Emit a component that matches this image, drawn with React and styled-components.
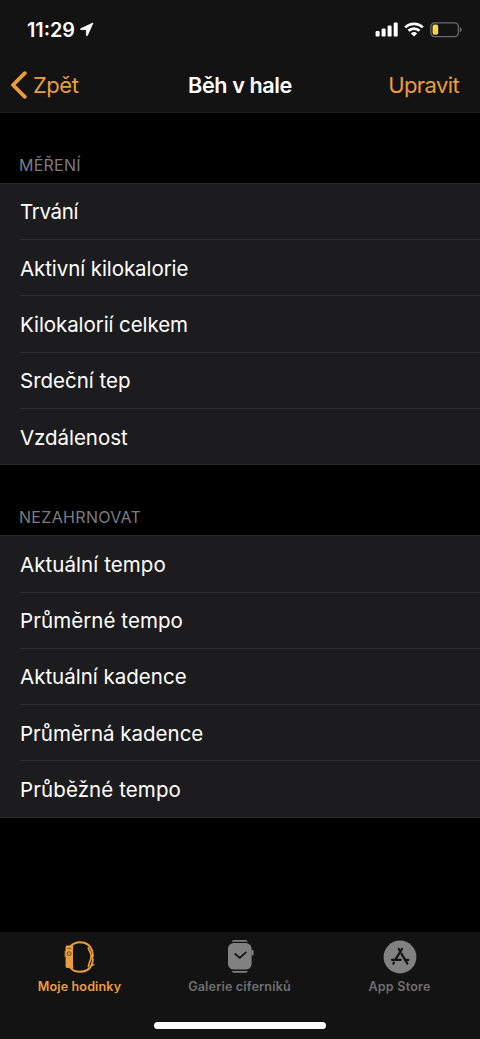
import React from 'react';
import styled, { createGlobalStyle } from 'styled-components';

const GlobalStyle = createGlobalStyle`
  * {
    box-sizing: border-box;
  }
  body {
    margin: 0;
    background-color: #000;
    font-family: Inter, 'Liberation Sans', sans-serif;
  }
`
const Screen = styled.div`
  width: 480px;
  height: 1039px;
  overflow: hidden;
  display: flex;
  flex-direction: column;
  background-color: #000;
  color: #fff;
`
const Header = styled.header`
  height: 113px;
  background-color: #131313;
  border-bottom: 1px solid #1d1d1d;
`
const StatusBar = styled.div`
  height: 57px;
  padding: 2px 18px 0 27px;
  display: flex;
  align-items: center;
  justify-content: space-between;
`
const StatusGroup = styled.div`
  display: flex;
  align-items: center;
  gap: ${({ $gap }) => $gap}px;
`
const Clock = styled.span`
  font-size: 19.8px;
  font-weight: 600;
  letter-spacing: 0;
`
const NavBar = styled.nav`
  height: 56px;
  padding: 0 21px 1px 10px;
  display: grid;
  grid-template-columns: 1fr auto 1fr;
  align-items: center;
`
const NavButton = styled.button`
  border: none;
  padding: 0;
  background: none;
  display: flex;
  align-items: center;
  gap: 6px;
  justify-self: ${({ $side }) => $side};
  font-family: inherit;
  font-size: 22px;
  letter-spacing: ${({ $spacing }) => $spacing}px;
  color: #eb9d3b;
`
const Title = styled.h1`
  margin: 0 0 0 11px;
  font-size: 21.6px;
  font-weight: 600;
  letter-spacing: -0.4px;
`
const Section = styled.section`
  padding-top: ${({ $top }) => $top}px;
`
const SectionTitle = styled.h2`
  margin: 0;
  padding: 0 19px;
  height: 28px;
  line-height: 20px;
  font-size: 16px;
  font-weight: 400;
  letter-spacing: ${({ $spacing }) => $spacing}px;
  color: #7c7c80;
`
const List = styled.ul`
  margin: 0;
  padding: 0 0 0 20px;
  list-style: none;
  background-color: #1c1c1e;
  border-top: 1px solid #2b2b2d;
  border-bottom: 1px solid #2b2b2d;
`
const Item = styled.li`
  height: 56.3px;
  padding-top: 0.8px;
  display: flex;
  align-items: center;
  font-size: 20.5px;
  letter-spacing: ${({ $spacing }) => $spacing}px;

  &:first-child {
    height: 55.2px;
  }

  & + & {
    border-top: 1px solid #2f2f31;
  }
`
const TabBar = styled.footer`
  height: 107px;
  margin-top: auto;
  background-color: #131313;
  display: flex;
  flex-direction: column;
  justify-content: space-between;
`
const Tabs = styled.div`
  display: grid;
  grid-template-columns: repeat(3, 1fr);
`
const Tab = styled.button`
  border: none;
  background: none;
  padding: 6px 1px 0 0;
  display: flex;
  flex-direction: column;
  align-items: center;
  font-family: inherit;
  font-size: 12.6px;
  font-weight: 600;
  line-height: 17px;
  letter-spacing: ${({ $spacing }) => $spacing}px;
  color: ${({ $active }) => ($active ? '#eb9d3b' : '#6f6f6f')};

  svg {
    display: block;
    margin-bottom: 2px;
  }
`
const HomeIndicator = styled.div`
  width: 172px;
  height: 7px;
  margin: 0 auto 10px;
  border-radius: 4px;
  background-color: #fff;
`

const LocationIcon = () => (
  <svg width="14" height="15" viewBox="0 0 14 15">
    <path d="M13 1 L0.6 6.8 Q0.2 7.5 1 7.6 H6.4 V13.2 Q6.8 14.2 7.4 13.4 Z" fill="#fff" stroke="#fff" strokeWidth="0.8" strokeLinejoin="round" />
  </svg>
);

const SignalIcon = () => (
  <svg width="23" height="15" viewBox="0 0 23 15" fill="#fff">
    <rect x="0.6" y="9" width="4" height="5.6" rx="1.2" />
    <rect x="6.6" y="6.6" width="4" height="8" rx="1.2" />
    <rect x="12.6" y="3.6" width="4" height="11" rx="1.2" />
    <rect x="18.7" y="0.4" width="4" height="14.2" rx="1.2" />
  </svg>
);

const WifiIcon = () => (
  <svg width="20" height="15" viewBox="0 0 20 15" fill="none" stroke="#fff" strokeWidth="2.7">
    <path d="M1.2 5.4 A12.6 12.6 0 0 1 18.8 5.4" />
    <path d="M4.5 8.8 A7.9 7.9 0 0 1 15.5 8.8" />
    <path d="M10 14.6 L6.9 11.5 A4.5 4.5 0 0 1 13.1 11.5 Z" fill="#fff" stroke="none" />
  </svg>
);

const BatteryIcon = () => (
  <svg width="32" height="16" viewBox="0 0 32 16">
    <rect x="0.8" y="0.8" width="27.6" height="13.8" rx="4" fill="none" stroke="#6b6b68" strokeWidth="1.3" />
    <rect x="2.6" y="2.6" width="5.6" height="10.2" rx="2" fill="#f8d648" />
    <path d="M29.8 5.2 Q31.8 6 31.8 7.7 Q31.8 9.4 29.8 10.2 Z" fill="#6b6b68" />
  </svg>
);

const BackIcon = () => (
  <svg width="17" height="28" viewBox="0 0 17 28">
    <path d="M14.8 2.2 L3 14 L14.8 25.8" fill="none" stroke="#eb9d3b" strokeWidth="3.8" strokeLinecap="round" strokeLinejoin="round" />
  </svg>
);

const WatchIcon = () => (
  <svg width="34" height="38" viewBox="0 0 34 38">
    <g fill="none" stroke="#eb9d3b" strokeLinecap="round">
      <path d="M7.4 8.4 C10 5.4 13.6 4.2 17 4.2 C22.8 4.2 27.4 7.4 29 12.4 C29.8 14.8 29.6 16.6 30 18.4" strokeWidth="1.9" />
      <path d="M7.4 29.6 C9.8 32.6 13.2 33.8 17 33.8 C22 33.8 26.6 31.4 28.6 27 C29.6 24.8 29.8 23 29.8 21.2" strokeWidth="1.9" />
      <path d="M7.6 9.2 C8.6 7 10.2 7.6 9.6 9.6" strokeWidth="1.3" />
      <path d="M7.6 28.8 C8.6 31 10.2 30.4 9.6 28.4" strokeWidth="1.3" />
      <path d="M25.4 9.8 C25.8 12.4 27.6 14 28 16.4 C28.3 18.2 28.2 20 27.4 22 C26.6 24 25.8 26 25.4 28.4" strokeWidth="1.7" />
      <path d="M28.8 18.4 L29.6 21" strokeWidth="1.6" />
      <path d="M31 26.4 L29.6 27.4" strokeWidth="1.2" />
    </g>
    <rect x="2.6" y="7.6" width="7.4" height="22.4" rx="1.4" fill="#eb9d3b" />
    <path d="M2.2 12.6 V19" stroke="#eb9d3b" strokeWidth="1" />
    <circle cx="6.2" cy="15.6" r="1.9" fill="#eb9d3b" stroke="#5a3c17" strokeWidth="0.9" />
    <path d="M4.6 10.4 H8" stroke="#5a3c17" strokeWidth="0.7" />
  </svg>
);

const FaceIcon = () => (
  <svg width="34" height="38" viewBox="0 0 34 38">
    <rect x="5" y="5" width="23.6" height="26.6" rx="5.6" fill="#818181" />
    <rect x="28.4" y="12" width="2.2" height="5.4" rx="1" fill="#818181" />
    <path d="M8.8 3.7 Q9.2 2.1 11 2.1 H22.6 Q24.4 2.1 24.8 3.7 Z" fill="#818181" />
    <path d="M8.8 33 Q9.2 34.8 11 34.8 H22.6 Q24.4 34.8 24.8 33 Z" fill="#818181" />
    <path d="M12.2 16 L16.8 19.8 L22.8 14.4" fill="none" stroke="#131313" strokeWidth="1.7" strokeLinecap="round" strokeLinejoin="round" />
  </svg>
);

const StoreIcon = () => (
  <svg width="34" height="38" viewBox="0 0 34 38">
    <circle cx="17" cy="19" r="16.4" fill="#818181" />
    <g fill="none" stroke="#131313" strokeWidth="2.2" strokeLinecap="round">
      <path d="M19 11 L12.4 21.6" />
      <path d="M15.8 11 L16.6 12.4 M18.4 15.6 L24.4 25.6" />
      <path d="M9 21.8 H17.8 M22.4 21.8 H25.4" />
      <path d="M10.9 24.6 L10.3 25.6" />
    </g>
  </svg>
);

const sections = [
  {
    title: 'MĚŘENÍ',
    top: 42,
    spacing: 0.25,
    items: [
      { label: 'Trvání', spacing: -0.35 },
      { label: 'Aktivní kilokalorie', spacing: -0.08 },
      { label: 'Kilokalorií celkem', spacing: -0.08 },
      { label: 'Srdeční tep', spacing: 0 },
      { label: 'Vzdálenost', spacing: -0.05 },
    ],
  },
  {
    title: 'NEZAHRNOVAT',
    top: 42,
    spacing: 0.32,
    items: [
      { label: 'Aktuální tempo', spacing: 0.07 },
      { label: 'Průměrné tempo', spacing: 0.07 },
      { label: 'Aktuální kadence', spacing: 0 },
      { label: 'Průměrná kadence', spacing: 0 },
      { label: 'Průběžné tempo', spacing: 0.1 },
    ],
  },
];

function App() {
  return (
    <Screen>
      <GlobalStyle />
      <Header>
        <StatusBar>
          <StatusGroup $gap={5}>
            <Clock>11:29</Clock>
            <LocationIcon />
          </StatusGroup>
          <StatusGroup $gap={6}>
            <SignalIcon />
            <WifiIcon />
            <BatteryIcon />
          </StatusGroup>
        </StatusBar>
        <NavBar>
          <NavButton $side="start" $spacing={-0.5}>
            <BackIcon />
            Zpět
          </NavButton>
          <Title>Běh v hale</Title>
          <NavButton $side="end" $spacing={-0.6}>Upravit</NavButton>
        </NavBar>
      </Header>
      {sections.map((section) => (
        <Section key={section.title} $top={section.top}>
          <SectionTitle $spacing={section.spacing}>{section.title}</SectionTitle>
          <List>
            {section.items.map((item) => (
              <Item key={item.label} $spacing={item.spacing}>{item.label}</Item>
            ))}
          </List>
        </Section>
      ))}
      <TabBar>
        <Tabs>
          <Tab $active $spacing={0.1}>
            <WatchIcon />
            Moje hodinky
          </Tab>
          <Tab $spacing={0.15}>
            <FaceIcon />
            Galerie ciferníků
          </Tab>
          <Tab $spacing={0.2}>
            <StoreIcon />
            App Store
          </Tab>
        </Tabs>
        <HomeIndicator />
      </TabBar>
    </Screen>
  );
}

export default App;
